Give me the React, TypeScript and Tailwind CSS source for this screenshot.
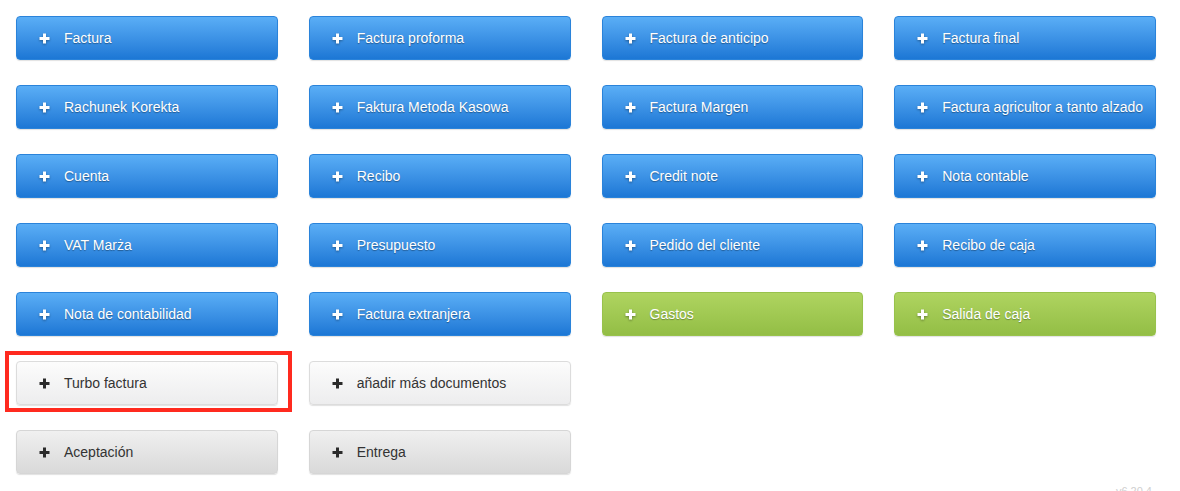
import React from 'react';

type Variant = 'blue' | 'green' | 'light' | 'gray';

interface DocButton {
  label: string;
  variant: Variant;
  marked?: boolean;
}

const buttons: (DocButton | null)[] = [
  { label: 'Factura', variant: 'blue' },
  { label: 'Factura proforma', variant: 'blue' },
  { label: 'Factura de anticipo', variant: 'blue' },
  { label: 'Factura final', variant: 'blue' },
  { label: 'Rachunek Korekta', variant: 'blue' },
  { label: 'Faktura Metoda Kasowa', variant: 'blue' },
  { label: 'Factura Margen', variant: 'blue' },
  { label: 'Factura agricultor a tanto alzado', variant: 'blue' },
  { label: 'Cuenta', variant: 'blue' },
  { label: 'Recibo', variant: 'blue' },
  { label: 'Credit note', variant: 'blue' },
  { label: 'Nota contable', variant: 'blue' },
  { label: 'VAT Marża', variant: 'blue' },
  { label: 'Presupuesto', variant: 'blue' },
  { label: 'Pedido del cliente', variant: 'blue' },
  { label: 'Recibo de caja', variant: 'blue' },
  { label: 'Nota de contabilidad', variant: 'blue' },
  { label: 'Factura extranjera', variant: 'blue' },
  { label: 'Gastos', variant: 'green' },
  { label: 'Salida de caja', variant: 'green' },
  { label: 'Turbo factura', variant: 'light', marked: true },
  { label: 'añadir más documentos', variant: 'light' },
  null,
  null,
  { label: 'Aceptación', variant: 'gray' },
  { label: 'Entrega', variant: 'gray' },
];

const variantClass: Record<Variant, string> = {
  blue: 'bg-gradient-to-b from-[#5aaef6] to-[#1c77d5] border-[#2a83da] text-white [text-shadow:0_1px_1px_rgba(0,0,0,0.35)]',
  green: 'bg-gradient-to-b from-[#afd460] to-[#93be45] border-[#98c24c] text-white [text-shadow:0_1px_1px_rgba(0,0,0,0.3)]',
  light: 'bg-gradient-to-b from-[#fcfcfc] to-[#ededee] border-[#dcdcdc] text-[#333]',
  gray: 'bg-gradient-to-b from-[#f0f0f0] to-[#d9d9d9] border-[#d6d6d6] text-[#333]',
};

function PlusIcon({ dark }: { dark: boolean }) {
  return (
    <svg
      width="11"
      height="11"
      viewBox="0 0 11 11"
      className={dark ? '' : '[filter:drop-shadow(0_1px_1px_rgba(0,0,0,0.35))]'}
    >
      <path d="M5.5 0.5v10M0.5 5.5h10" stroke={dark ? '#2b2b2b' : '#ffffff'} strokeWidth="3" />
    </svg>
  );
}

export default function App() {
  return (
    <div className="w-[1180px] h-[491px] overflow-hidden bg-white font-['Liberation_Sans',Arial,sans-serif]">
      <div className="grid w-[1156px] grid-cols-4 gap-x-[31px] gap-y-[25px] pt-4 pl-4">
        {buttons.map((b, i) =>
          b ? (
            <div key={i} className="relative">
              <button
                className={`flex h-[44px] w-full items-center rounded-[4px] border pl-[22px] text-left text-[14px] shadow-[0_1px_1px_rgba(0,0,0,0.12)] ${variantClass[b.variant]}`}
              >
                <PlusIcon dark={b.variant === 'light' || b.variant === 'gray'} />
                <span className="ml-[14px]">{b.label}</span>
              </button>
              {b.marked && (
                <div className="pointer-events-none absolute -left-[11px] -top-[10px] h-[61px] w-[287px] border-4 border-[#ff2a1f]" />
              )}
            </div>
          ) : (
            <div key={i} />
          )
        )}
      </div>
      <div className="mt-[11px] pr-[28px] text-right text-[11px] leading-[13px] text-[#cfcfcf]">v6.20.4</div>
    </div>
  );
}
